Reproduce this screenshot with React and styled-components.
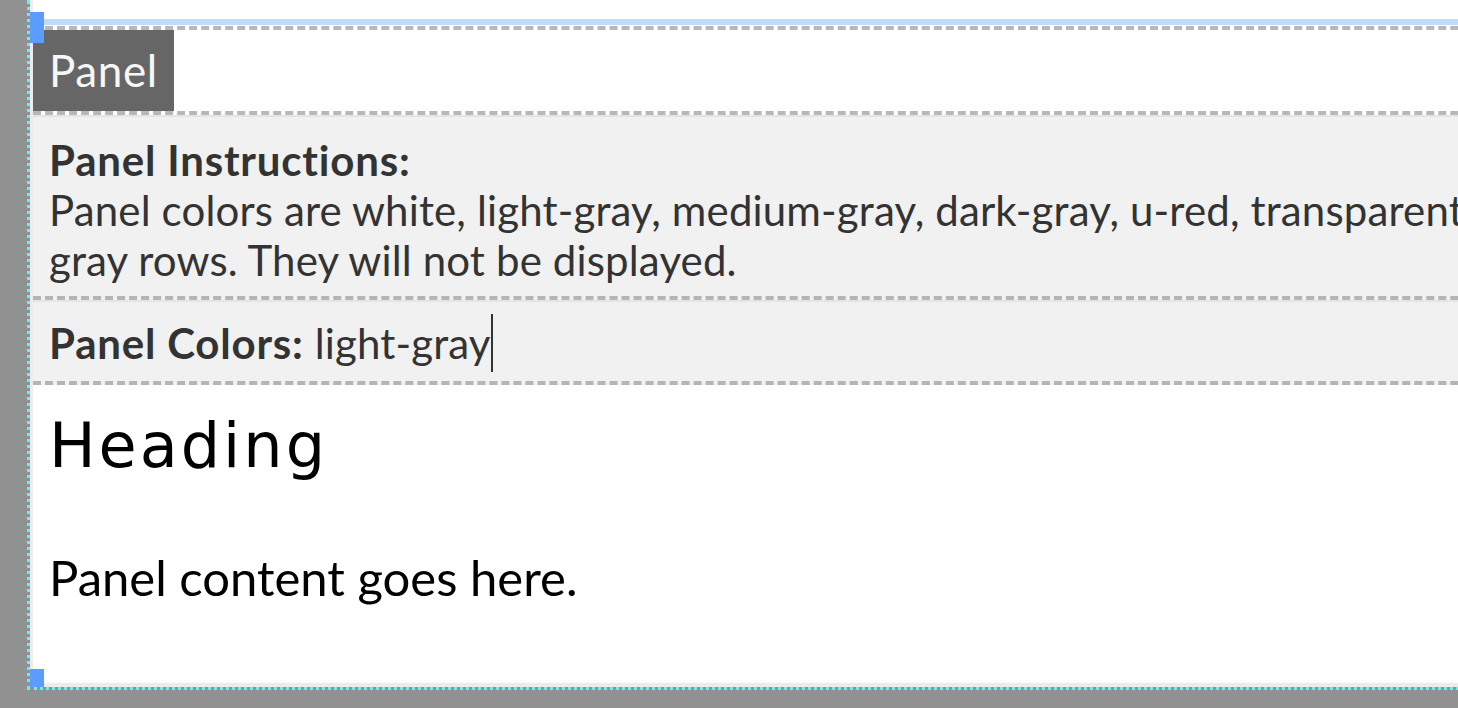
import styled, { createGlobalStyle } from 'styled-components'

const GlobalStyle = createGlobalStyle`
  html, body {
    margin: 0;
    padding: 0;
    background: #919191;
    overflow: hidden;
  }
  body {
    font-family: Lato, "Open Sans", sans-serif;
  }
`

const Frame = styled.div`
  box-sizing: border-box;
  margin-left: 27px;
  width: 2200px;
  height: 690px;
  border-left: 3px dotted #5ef3f3;
  border-bottom: 3px dotted #5ef3f3;
`

const Canvas = styled.div`
  position: relative;
  box-sizing: border-box;
  height: 100%;
  padding-top: 19px;
  background: #ffffff;
  border-left: 3px solid #ececec;
  border-bottom: 4px solid #ececec;
`

const Handle = styled.span`
  position: absolute;
  left: -3px;
  width: 14px;
  height: ${p => p.$h}px;
  background: #5a9cff;
  ${p => (p.$bottom ? 'bottom: -4px;' : 'top: 12px;')}
`

const Selected = styled.section`
  border-top: 6px solid #c0dcfc;
  padding-top: 1px;
`

const LabelRow = styled.div`
  display: flex;
  height: 81px;
  border-top: 4px dashed #b8b8b8;
  border-bottom: 4px dashed #b8b8b8;
`

const Label = styled.div`
  padding: 0 16px;
  background: #666666;
  color: #f7f7f7;
  font-size: 44px;
  letter-spacing: 0.6px;
  line-height: 81px;
`

const GrayRow = styled.div`
  background: #f1f1f1;
  border-top: 2px solid #e4e4e4;
  border-bottom: 4px dashed #b5b5b5;
  padding: ${p => p.$pad};
  color: #333333;
  font-size: 42px;
  line-height: 50px;
  letter-spacing: 0.15px;
  white-space: nowrap;
`

const Strong = styled.strong`
  font-weight: 700;
  letter-spacing: 0.8px;
`

const Caret = styled.span`
  position: relative;
  display: inline-block;
  width: 2px;
  height: 0;

  &::after {
    content: '';
    position: absolute;
    left: 0;
    bottom: -13px;
    width: 2px;
    height: 58px;
    background: #333333;
  }
`

const Content = styled.div`
  padding: 24px 16px 0;
  color: #000000;
`

const Heading = styled.h2`
  margin: 0;
  font-family: "DejaVu Sans", sans-serif;
  font-weight: 400;
  font-size: 62px;
  line-height: 74px;
  letter-spacing: 3px;
`

const Text = styled.p`
  margin: 61px 0 0;
  font-size: 49px;
  line-height: 66px;
`

export default function App() {
  return (
    <>
      <GlobalStyle />
      <Frame>
        <Canvas>
          <Handle $h={31} />
          <Handle $h={18} $bottom />
          <Selected>
            <LabelRow>
              <Label>Panel</Label>
            </LabelRow>
            <GrayRow $pad="18px 16px 11px">
              <Strong>Panel Instructions:</Strong>
              <br />
              Panel colors are white, light-gray, medium-gray, dark-gray, u-red, transparent. Do not edit the
              <br />
              gray rows. They will not be displayed.
            </GrayRow>
            <GrayRow $pad="16px 16px 13px">
              <Strong>Panel Colors:</Strong> light-gray
              <Caret />
            </GrayRow>
            <Content>
              <Heading>Heading</Heading>
              <Text>Panel content goes here.</Text>
            </Content>
          </Selected>
        </Canvas>
      </Frame>
    </>
  )
}
